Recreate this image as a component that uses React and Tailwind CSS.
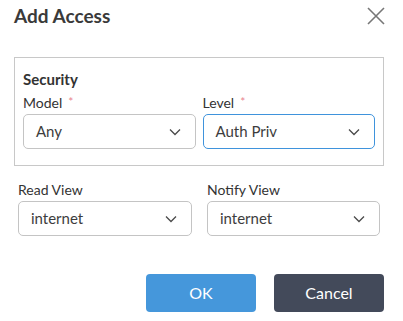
import React from "react";

function Chevron() {
  return (
    <svg width="12" height="8" viewBox="0 0 12 8" fill="none" className="shrink-0">
      <path d="M1 1.5l5 5 5-5" stroke="#4a4a4a" strokeWidth="1.3" />
    </svg>
  );
}

function Select({ value, active }) {
  return (
    <div
      className={`h-[35px] flex items-center justify-between pl-[12px] pr-[14px] rounded-[5px] border text-[15px] text-[#3d3d3d] bg-white ${
        active ? "border-[#3f93dc]" : "border-[#c4c4c4]"
      }`}
    >
      <span>{value}</span>
      <Chevron />
    </div>
  );
}

function Field({ label, required, value, active }) {
  return (
    <div className="flex flex-col">
      <div className="h-[20px] flex items-center text-[14px] text-[#333] mb-[2px]">
        {label}
        {required && <span className="text-[#e8838f] ml-[6px] text-[12px]">*</span>}
      </div>
      <Select value={value} active={active} />
    </div>
  );
}

export default function App() {
  return (
    <div className="w-[403px] h-[321px] bg-white font-['Lato',sans-serif] text-[#333]">
      {/* Header */}
      <div className="flex items-center justify-between pl-[14px] pr-[18px] pt-[2px] h-[30px]">
        <h1 className="text-[19px] font-bold text-[#3a3a3a]">Add Access</h1>
        <svg width="18" height="18" viewBox="0 0 18 18" fill="none">
          <path d="M1 1l16 16M17 1L1 17" stroke="#777" strokeWidth="1.6" />
        </svg>
      </div>

      {/* Security box */}
      <div className="mx-[14px] mt-[27px] w-[370px] border border-[#c8c8c8] px-[8px] pt-[11px] pb-[16px]">
        <div className="text-[15px] font-bold text-[#333] h-[20px] flex items-center">Security</div>
        <div className="grid grid-cols-2 gap-[7px] mt-[3px]">
          <Field label="Model" required value="Any" />
          <Field label="Level" required value="Auth Priv" active />
        </div>
      </div>

      {/* Views */}
      <div className="grid grid-cols-[174px_173px] gap-[15px] px-[18px] mt-[13px]">
        <Field label="Read View" value="internet" />
        <Field label="Notify View" value="internet" />
      </div>

      {/* Buttons */}
      <div className="flex justify-end gap-[18px] pr-[19px] mt-[38px]">
        <button className="w-[110px] h-[38px] rounded-[4px] bg-[#4597db] text-white text-[16px]">OK</button>
        <button className="w-[110px] h-[38px] rounded-[4px] bg-[#434a5a] text-white text-[16px]">Cancel</button>
      </div>
    </div>
  );
}
